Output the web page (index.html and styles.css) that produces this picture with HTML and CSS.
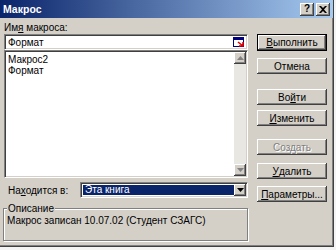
FILE: index.html
```html
<!DOCTYPE html>
<html>
<head>
<meta charset="utf-8">
<link rel="stylesheet" href="styles.css">
</head>
<body>
<div class="win">
  <div class="titlebar">
    <span class="title">Макрос</span>
    <div class="tbtns">
      <span class="tbtn help">?</span>
      <span class="tbtn close"><svg width="8" height="7" viewBox="0 0 8 7"><path d="M0 0h2l2 2 2-2h2L5 3.5 8 7H6L4 5 2 7H0l3-3.5z" fill="#000"/></svg></span>
    </div>
  </div>
  <div class="content">
    <div class="left">
      <div class="lbl">Им<u>я</u> макроса:</div>
      <div class="input">
        <span class="itext">Формат</span>
        <svg class="ricon" width="12" height="11" viewBox="0 0 12 11">
          <rect x="0.5" y="0.5" width="10" height="9" fill="#fff" stroke="#000080"/>
          <rect x="1" y="1" width="9" height="2" fill="#000080"/>
          <path d="M5 5l5 4M10 5v4H6" stroke="#e00000" stroke-width="1.6" fill="none"/>
        </svg>
      </div>
      <div class="list">
        <div class="items">
          <div class="item">Макрос2</div>
          <div class="item">Формат</div>
        </div>
        <div class="vscroll">
          <div class="sbtn"><svg width="7" height="4" viewBox="0 0 7 4"><path d="M3.5 0L7 4H0z" fill="#808080"/></svg></div>
          <div class="track"></div>
          <div class="sbtn"><svg width="7" height="4" viewBox="0 0 7 4"><path d="M0 0h7L3.5 4z" fill="#808080"/></svg></div>
        </div>
      </div>
      <div class="row">
        <span class="rlbl">На<u>х</u>одится в:</span>
        <div class="combo">
          <span class="sel">Эта книга</span>
          <span class="ddbtn"><svg width="7" height="4" viewBox="0 0 7 4"><path d="M0 0h7L3.5 4z" fill="#000"/></svg></span>
        </div>
      </div>
      <fieldset class="group">
        <legend>Описание</legend>
        <div class="desc">Макрос записан 10.07.02 (Студент СЗАГС)</div>
      </fieldset>
    </div>
    <div class="right">
      <div class="btn default b1"><u>В</u>ыполнить</div>
      <div class="btn b2">Отмена</div>
      <div class="btn b3">Во<u>й</u>ти</div>
      <div class="btn b4"><u>И</u>зменить</div>
      <div class="btn disabled b5">Создать</div>
      <div class="btn b6"><u>У</u>далить</div>
      <div class="btn b7"><u>П</u>араметры...</div>
    </div>
  </div>
</div>
</body>
</html>
```

FILE: styles.css
```css
* { box-sizing: border-box; }
body {
  margin: 0;
  width: 336px;
  height: 250px;
  background: #f4f4f4;
  font: 10px "Liberation Sans", Arial, sans-serif;
  color: #000;
  overflow: hidden;
}
u { text-decoration: underline; text-underline-offset: 1px; }
.win {
  width: 334px;
  height: 247px;
  background: #d4d0c8;
  border-right: 1px solid #404040;
  border-bottom: 1px solid #404040;
  box-shadow: inset -1px -1px #808080;
}
.titlebar {
  height: 18px;
  background: linear-gradient(to right, #0a246a, #a6caf0);
  display: flex;
  align-items: center;
  padding: 0 3px 0 3px;
  color: #fff;
  font-weight: bold;
  font-size: 10.5px;
}
.title { flex: 1; }
.tbtns { display: flex; gap: 2px; }
.tbtn {
  width: 14px;
  height: 13px;
  background: #d4d0c8;
  box-shadow: inset -1px -1px #404040, inset 1px 1px #fff, inset -2px -2px #808080;
  color: #000;
  font-size: 10px;
  font-weight: bold;
  display: flex;
  align-items: center;
  justify-content: center;
  line-height: 1;
}
.content {
  display: flex;
  padding: 3px 0 0 4px;
  gap: 9px;
}
.left { width: 244px; }
.lbl { height: 13px; line-height: 13px; }
.input, .list, .combo {
  background: #fff;
  border: 1px solid;
  border-color: #808080 #fff #fff #808080;
  box-shadow: inset 1px 1px #404040, inset -1px -1px #d4d0c8;
}
.input {
  height: 16px;
  display: flex;
  align-items: center;
  padding: 0 2px 0 3px;
}
.itext { flex: 1; }
.ricon { display: block; }
.list {
  height: 128px;
  display: flex;
  padding: 1px;
}
.items { flex: 1; padding: 2px 2px; }
.item { height: 11px; line-height: 11px; }
.vscroll {
  width: 12px;
  display: flex;
  flex-direction: column;
}
.sbtn {
  height: 12px;
  background: #d4d0c8;
  box-shadow: inset -1px -1px #404040, inset 1px 1px #fff, inset -2px -2px #808080;
  display: flex;
  align-items: center;
  justify-content: center;
}
.track { flex: 1; background: #e9e7e2; }
.row {
  display: flex;
  align-items: center;
  margin-top: 4px;
  height: 16px;
}
.rlbl { width: 76px; padding-left: 4px; }
.combo {
  flex: 1;
  height: 16px;
  display: flex;
  padding: 2px;
}
.sel {
  flex: 1;
  background: #0a246a;
  color: #fff;
  padding-left: 2px;
  line-height: 10px;
}
.ddbtn {
  width: 12px;
  margin: -1px -1px -1px 0;
  background: #d4d0c8;
  box-shadow: inset -1px -1px #404040, inset 1px 1px #fff, inset -2px -2px #808080;
  display: flex;
  align-items: center;
  justify-content: center;
}
.group {
  margin: 5px 0 0 -1px;
  width: 245px;
  height: 38px;
  padding: 0 3px;
  border: 1px solid #808080;
  box-shadow: inset 1px 1px #fff, 1px 1px #fff;
}
.group legend {
  padding: 0 1px;
  margin-left: 0;
  line-height: 11px;
  background: #d4d0c8;
}
.desc { line-height: 12px; margin-top: 1px; }
.right {
  width: 70px;
  display: flex;
  flex-direction: column;
}
.btn {
  height: 16px;
  background: #d4d0c8;
  box-shadow: inset -1px -1px #404040, inset 1px 1px #fff, inset -2px -2px #808080;
  display: flex;
  align-items: center;
  justify-content: center;
}
.btn.default {
  height: 17px;
  border: 1px solid #000;
}
.btn.disabled { color: #808080; text-shadow: 1px 1px #fff; }
.b1 { margin-top: 13px; }
.b2 { margin-top: 7px; }
.b3 { margin-top: 15px; }
.b4 { margin-top: 5px; }
.b5 { margin-top: 13px; }
.b6 { margin-top: 8px; }
.b7 { margin-top: 7px; }
```
